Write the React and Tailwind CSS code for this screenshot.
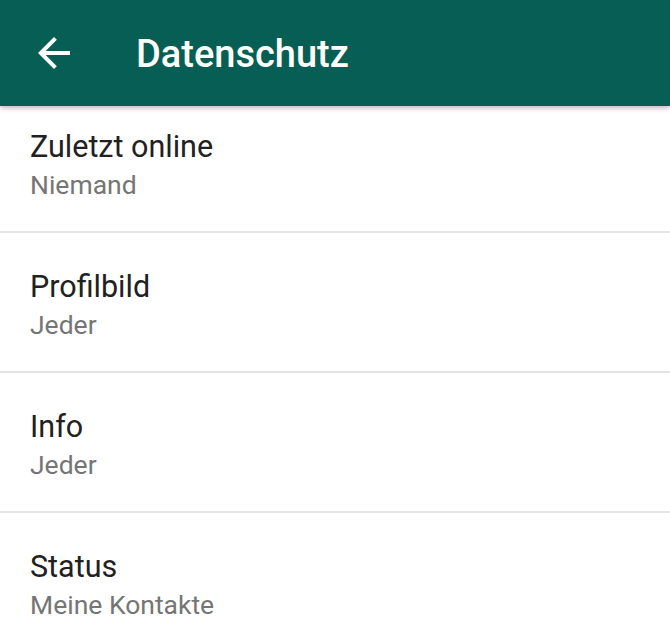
import React from 'react';

const items = [
  { title: 'Zuletzt online', value: 'Niemand' },
  { title: 'Profilbild', value: 'Jeder' },
  { title: 'Info', value: 'Jeder' },
  { title: 'Status', value: 'Meine Kontakte' },
];

function BackArrow() {
  return (
    <svg viewBox="0 0 24 24" className="w-12 h-12 shrink-0" fill="#ffffff">
      <path d="M20 11H7.83l5.59-5.59L12 4l-8 8 8 8 1.41-1.41L7.83 13H20v-2z" />
    </svg>
  );
}

export default function App() {
  return (
    <div className="w-[670px] h-[643px] overflow-hidden bg-white font-['Roboto',sans-serif]">
      {/* Toolbar */}
      <div className="relative z-10 h-[106px] bg-[#075e54] flex items-center pl-[30px] shadow-[0_2px_5px_rgba(0,0,0,0.28)]">
        <BackArrow />
        <h1 className="ml-[58px] mt-[2px] text-[38px] leading-[40px] font-medium text-white">
          Datenschutz
        </h1>
      </div>

      {/* Settings list */}
      <div>
        {items.map((item, index) => (
          <div
            key={index}
            className={
              index === 0
                ? 'px-[30px] pt-[23px] pb-[30px] border-b-2 border-[#e4e4e4]'
                : 'px-[30px] pt-[36px] pb-[30px] border-b-2 border-[#e4e4e4]'
            }
          >
            <div className="text-[30.5px] leading-[36px] text-[#212121]">{item.title}</div>
            <div className="mt-1 text-[26.5px] leading-[32px] text-[#757575]">{item.value}</div>
          </div>
        ))}
      </div>
    </div>
  );
}
